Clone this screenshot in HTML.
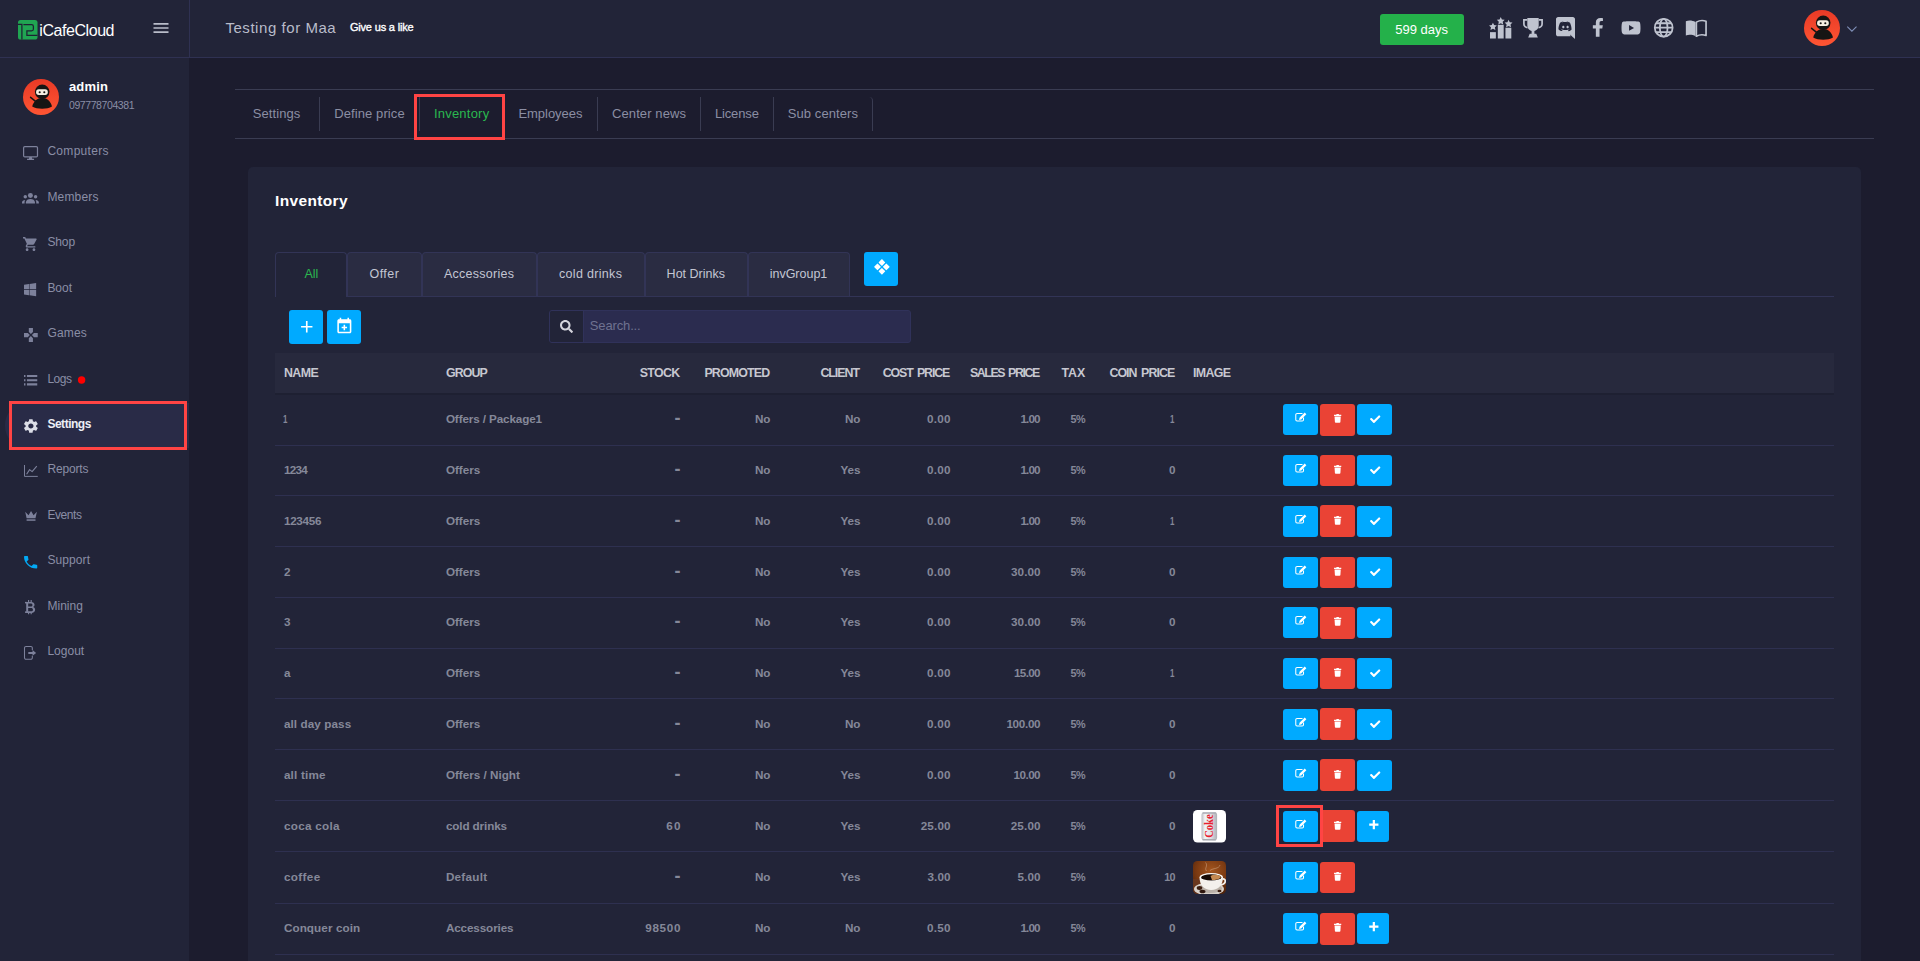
<!DOCTYPE html><html lang="en"><head><meta charset="utf-8"><title>iCafeCloud - Inventory</title><style>*{margin:0;padding:0}html,body{width:1920px;height:961px;overflow:hidden;background:#1c1c2e;font-family:"Liberation Sans", sans-serif}
.b{position:absolute}.ic{position:absolute;display:block;overflow:visible}
.t{position:absolute;white-space:nowrap;line-height:1;}</style></head><body>
<header>
<div class="b" style="left:0px;top:0px;width:1920px;height:57px;background:#222438;"></div>
<div class="b" style="left:0px;top:57px;width:1920px;height:1px;background:#2f3152;"></div>
<div class="b" style="left:189px;top:0px;width:1px;height:57px;background:#2f3152;"></div>
<svg class="ic" style="left:18px;top:20px;width:19.5px;height:19.5px" viewBox="0 0 19.500 19.500"><rect x="0" y="0" width="19.500" height="19.500" rx="2.600" fill="#20a552"/><path d="M0 4.300H3.900M3.900 3.700V19.500M5.400 4.600H13.600a1.800 1.800 0 0 1 1.800 1.800V9a1.800 1.800 0 0 1-1.800 1.800H8.900V15.400H19.500" fill="none" stroke="#1d2233" stroke-width="1.250"/></svg>
<svg class="ic" style="left:151px;top:16px;width:20px;height:24px;color:#b9bcc9;" viewBox="0 0 24 24" fill="currentColor" preserveAspectRatio="xMidYMid meet"><path d="M3 18h18v-2H3v2zm0-5h18v-2H3v2zm0-7v2h18V6H3z"/></svg>
<svg class="ic" style="left:1804px;top:10px;width:36px;height:36px" viewBox="0 0 36 36"><defs><linearGradient id="g2" x1="0" y1="0" x2="0" y2="1"><stop offset="0" stop-color="#e83a26"/><stop offset="1" stop-color="#ff5533"/></linearGradient></defs><circle cx="18" cy="18" r="18" fill="url(#g2)"/><path d="M9.200 27.600c1.500-5.600 5-8.600 10-8.600s8.500 3 9.800 8.600c-2.500 1.500-6 2.200-9.800 2.200s-7.500-.7-10-2.200z" fill="#161514"/><circle cx="19.200" cy="12.800" r="7.300" fill="#161514"/><rect x="13.100" y="10.300" width="11.700" height="5.600" rx="2.600" fill="#f6efe2"/><circle cx="16.700" cy="13.200" r="1.050" fill="#161514"/><circle cx="21.300" cy="13.200" r="1.050" fill="#161514"/><path d="M7.600 18.300l5.600 4.600" stroke="#161514" stroke-width="1.500" stroke-linecap="round"/></svg>
<svg class="ic" style="left:1843.7px;top:20.6px;width:15.8px;height:15.8px;color:#8090b8;" viewBox="0 0 24 24" fill="currentColor" preserveAspectRatio="xMidYMid meet"><path d="M5 8.500l7 7 7-7" fill="none" stroke="currentColor" stroke-width="1.600"/></svg>
<div class="b" style="left:1380px;top:14px;width:84px;height:31px;background:#24b14a;border-radius:3px;"></div>
<svg class="ic" style="left:1488.5px;top:17px;width:23.5px;height:21.5px;color:#bfc3cf;" viewBox="0 0 24 22" fill="currentColor" preserveAspectRatio="xMidYMid meet"><rect x="1" y="15.500" width="6" height="6.500"/><rect x="9" y="8" width="6" height="14"/><rect x="16.800" y="11" width="6" height="11"/><path d="M4 5.800l1.200 2.500 2.800.4-2 1.900.5 2.800L4 12.100l-2.500 1.300.5-2.800-2-1.900 2.800-.4z"/><path d="M12 0l1.200 2.500 2.800.4-2 1.900.5 2.800L12 6.300 9.500 7.600l.5-2.800-2-1.900 2.800-.4z"/><path d="M20 2.800l1.200 2.500 2.800.4-2 1.900.5 2.800L20 9.100l-2.500 1.300.5-2.800-2-1.900 2.800-.4z"/></svg>
<svg class="ic" style="left:1522.9px;top:17.7px;width:20px;height:19.4px;color:#bfc3cf;" viewBox="0 0 20 19.500" fill="currentColor" preserveAspectRatio="none"><path d="M4.300 0H15.700V7.500a5.700 5.700 0 0 1-11.400 0z"/><path d="M4.300 1.900H.9V6a3.600 3.600 0 0 0 3.600 3.600M15.700 1.900h3.400V6a3.600 3.600 0 0 1-3.600 3.600" fill="none" stroke="currentColor" stroke-width="1.700"/><rect x="8.600" y="12.500" width="2.800" height="3.800"/><path d="M5.200 19.500l1.500-3.600h6.600l1.500 3.600z"/></svg>
<svg class="ic" style="left:1556px;top:16.8px;width:19px;height:22px;color:#bfc3cf;" viewBox="0 0 20 23" fill="currentColor" preserveAspectRatio="xMidYMid meet"><path fill-rule="evenodd" d="M2.300 0h15.400C19 0 20 1 20 2.300V23l-2.400-2.100-1.400-1.300-1.400-1.300.6 2H2.300C1 20.300 0 19.300 0 18V2.300C0 1 1 0 2.300 0zM13.300 14.700s-.4-.5-.8-1c1.600-.4 2.200-1.400 2.200-1.400-.5.300-1 .6-1.400.7-.6.300-1.200.4-1.800.5-1.200.2-2.300.2-3.200 0-.7-.1-1.300-.3-1.800-.5-.3-.1-.6-.2-.9-.4l-.1-.1-.1 0c-.2-.100-.4-.2-.4-.2s.6 1 2.100 1.400c-.400.500-.800 1-.800 1-2.700-.1-3.700-1.800-3.700-1.800 0-3.900 1.700-7 1.700-7 1.700-1.300 3.400-1.300 3.400-1.300l.1.200c-2.200.6-3.200 1.600-3.200 1.600s.300-.100.700-.300c1.300-.6 2.300-.700 2.700-.800h.200c.700-.100 1.500-.100 2.400 0 1.100.100 2.300.500 3.500 1.100 0 0-1-.9-3-1.500l.2-.2s1.700 0 3.400 1.300c0 0 1.700 3.100 1.700 7 0 0-1 1.700-3.700 1.800zM7.700 9c-.700 0-1.200.6-1.200 1.400s.600 1.400 1.200 1.400c.700 0 1.200-.6 1.200-1.400S8.400 9 7.700 9zm4.500 0c-.700 0-1.200.6-1.200 1.400s.600 1.400 1.200 1.400c.700 0 1.200-.6 1.200-1.400S12.900 9 12.200 9z"/></svg>
<svg class="ic" style="left:1592.2px;top:18.1px;width:11.8px;height:18.7px;color:#bfc3cf;" viewBox="0 0 320 512" fill="currentColor" preserveAspectRatio="none"><path d="M279.14 288l14.22-92.66h-88.91v-60.130c0-25.350 12.420-50.060 52.240-50.060h40.420V6.260S260.430 0 225.360 0c-73.220 0-121.080 44.380-121.080 124.720v70.620H22.890V288h81.390v224h100.170V288z"/></svg>
<svg class="ic" style="left:1620.5px;top:18.5px;width:20.04px;height:17.8px;color:#bfc3cf;" viewBox="0 0 576 512" fill="currentColor" preserveAspectRatio="xMidYMid meet"><path d="M549.655 124.083c-6.281-23.650-24.787-42.276-48.284-48.597C458.781 64 288 64 288 64S117.220 64 74.629 75.486c-23.497 6.322-42.003 24.947-48.284 48.597-11.412 42.867-11.412 132.305-11.412 132.305s0 89.438 11.412 132.305c6.281 23.650 24.787 41.500 48.284 47.821C117.220 448 288 448 288 448s170.780 0 213.371-11.486c23.497-6.321 42.003-24.171 48.284-47.821 11.412-42.867 11.412-132.305 11.412-132.305s0-89.438-11.412-132.305zm-317.510 213.508V175.185l142.739 81.205-142.739 81.201z"/></svg>
<svg class="ic" style="left:1652.6px;top:16.7px;width:21.4px;height:21.4px;color:#bfc3cf;" viewBox="0 0 24 24" fill="currentColor" preserveAspectRatio="xMidYMid meet"><g fill="none" stroke="currentColor" stroke-width="2"><circle cx="12" cy="12" r="10"/><ellipse cx="12" cy="12" rx="4.300" ry="10"/><path d="M2 12h20M3.500 7h17M3.500 17h17"/></g></svg>
<svg class="ic" style="left:1684.7px;top:19.8px;width:21.9px;height:17px;color:#bfc3cf;" viewBox="0 0 26 20" fill="currentColor" preserveAspectRatio="none"><path d="M1 1.500c3.500-1.300 8-1 11.500 1V19c-3.500-1.800-8-2-11.500-.8z"/><path d="M25 1.500c-3.500-1.300-8-1-11.500 1V19c3.500-1.800 8-2 11.500-.8z" fill="none" stroke="currentColor" stroke-width="2" stroke-linejoin="round"/></svg>
<span class="t" style="left:39.30px;top:23px;font-size:16px;font-weight:400;color:#ffffff;letter-spacing:-0.440px;">iCafeCloud</span>
<span class="t" style="left:225.40px;top:20px;font-size:15px;font-weight:400;color:#b9bcca;letter-spacing:0.554px;">Testing for Maa</span>
<span class="t" style="left:349.90px;top:22px;font-size:11px;font-weight:400;color:#ffffff;letter-spacing:-0.172px;-webkit-text-stroke:0.35px #ffffff;">Give us a like</span>
<span class="t" style="left:1395.30px;top:23px;font-size:13px;font-weight:400;color:#ffffff;letter-spacing:-0.009px;">599 days</span>
</header>
<aside>
<div class="b" style="left:0px;top:58px;width:189px;height:903px;background:#222438;"></div>
<svg class="ic" style="left:23px;top:79px;width:36px;height:36px" viewBox="0 0 36 36"><defs><linearGradient id="g1" x1="0" y1="0" x2="0" y2="1"><stop offset="0" stop-color="#e83a26"/><stop offset="1" stop-color="#ff5533"/></linearGradient></defs><circle cx="18" cy="18" r="18" fill="url(#g1)"/><path d="M9.200 27.600c1.500-5.600 5-8.600 10-8.600s8.500 3 9.800 8.600c-2.500 1.500-6 2.200-9.800 2.200s-7.500-.7-10-2.200z" fill="#161514"/><circle cx="19.200" cy="12.800" r="7.300" fill="#161514"/><rect x="13.100" y="10.300" width="11.700" height="5.600" rx="2.600" fill="#f6efe2"/><circle cx="16.700" cy="13.200" r="1.050" fill="#161514"/><circle cx="21.300" cy="13.200" r="1.050" fill="#161514"/><path d="M7.600 18.300l5.600 4.600" stroke="#161514" stroke-width="1.500" stroke-linecap="round"/></svg>
<div class="b" style="left:5px;top:403px;width:184px;height:45px;background:#292b47;border-radius:22px 0 0 22px;"></div>
<div class="b" style="left:9px;top:401px;width:178px;height:49px;background:#292b47;border:3px solid #ff4444;box-sizing:border-box;"></div>
<svg class="ic" style="left:22.9px;top:145.9px;width:15.1px;height:14.1px;color:#7d819b;" viewBox="0 0 15 14" fill="currentColor" preserveAspectRatio="none"><rect x=".6" y=".6" width="13.800" height="10.300" rx="1.200" fill="none" stroke="currentColor" stroke-width="1.200"/><path d="M6.300 11h2.400l.5 1.600H11V14H4v-1.400h1.800z"/></svg>
<svg class="ic" style="left:22.25px;top:193.1px;width:16.85px;height:10.4px;color:#7d819b;" viewBox="0 0 17 10.400" fill="currentColor" preserveAspectRatio="none"><circle cx="8.500" cy="2.500" r="2.500"/><path d="M3.900 10.400v-1c0-2.200 2.300-3.400 4.600-3.400s4.600 1.200 4.600 3.400v1z"/><circle cx="3.300" cy="3.700" r="1.750"/><circle cx="13.700" cy="3.700" r="1.750"/><path d="M0 10.400v-.9c0-1.500 1.400-2.500 3.300-2.600-.5.700-.7 1.500-.7 2.400v1.100z"/><path d="M17 10.400v-.9c0-1.500-1.400-2.500-3.300-2.600.5.700.7 1.500.7 2.400v1.100z"/></svg>
<svg class="ic" style="left:22.9px;top:236.9px;width:13.7px;height:14.1px;color:#7d819b;" viewBox="1 2 20 20" fill="currentColor" preserveAspectRatio="none"><path d="M7 18c-1.1 0-1.99.9-1.99 2S5.9 22 7 22s2-.9 2-2-.9-2-2-2zM1 2v2h2l3.6 7.59-1.35 2.45c-.16.28-.25.61-.25.96 0 1.1.9 2 2 2h12v-2H7.42c-.14 0-.25-.11-.25-.25l.03-.12.9-1.63h7.45c.75 0 1.41-.41 1.75-1.03l3.58-6.49c.08-.14.12-.31.12-.48 0-.55-.45-1-1-1H5.21l-.94-2H1zm16 16c-1.1 0-1.99.9-1.99 2s.89 2 1.99 2 2-.9 2-2-.9-2-2-2z"/></svg>
<svg class="ic" style="left:24.1px;top:282.75px;width:12.15px;height:13.25px;color:#7d819b;" viewBox="0 32 448 448" fill="currentColor" preserveAspectRatio="none"><path d="M0 93.7l183.6-25.3v177.4H0V93.7zm0 324.6l183.6 25.3V268.4H0v149.9zm203.8 28L448 480V268.4H203.8v177.9zm0-380.6v180.1H448V32L203.8 65.7z"/></svg>
<svg class="ic" style="left:23.75px;top:327.9px;width:13.75px;height:14.1px;color:#7d819b;" viewBox="2 2 20 20" fill="currentColor" preserveAspectRatio="none"><path d="M15 7.5V2H9v5.5l3 3 3-3zM7.5 9H2v6h5.5l3-3-3-3zM9 16.5V22h6v-5.5l-3-3-3 3zM16.5 9l-3 3 3 3H22V9h-5.5z"/></svg>
<svg class="ic" style="left:23.75px;top:375px;width:13.25px;height:10.4px;color:#7d819b;" viewBox="3 7 18 10" fill="currentColor" preserveAspectRatio="none"><path d="M3 13h2v-2H3v2zm0 4h2v-2H3v2zm0-8h2V7H3v2zm4 4h14v-2H7v2zm0 4h14v-2H7v2zM7 7v2h14V7H7z"/></svg>
<svg class="ic" style="left:23.75px;top:419.1px;width:13.75px;height:14.15px;color:#dcdee7;" viewBox="2.6 2 18.8 20" fill="currentColor" preserveAspectRatio="none"><path d="M19.14 12.94c.04-.3.06-.61.06-.94 0-.32-.02-.64-.07-.94l2.03-1.58c.18-.14.23-.41.12-.61l-1.92-3.32c-.12-.22-.37-.29-.59-.22l-2.39.96c-.5-.38-1.03-.7-1.62-.94l-.36-2.54c-.04-.24-.24-.41-.48-.41h-3.84c-.24 0-.43.17-.47.41l-.36 2.54c-.59.24-1.13.57-1.62.94l-2.39-.96c-.22-.08-.47 0-.59.22L2.74 8.87c-.12.21-.08.47.12.61l2.03 1.58c-.05.3-.09.63-.09.94s.02.64.07.94l-2.03 1.58c-.18.14-.23.41-.12.61l1.92 3.32c.12.22.37.29.59.22l2.39-.96c.5.38 1.03.7 1.62.94l.36 2.54c.05.24.24.41.48.41h3.84c.24 0 .44-.17.47-.41l.36-2.54c.59-.24 1.13-.56 1.62-.94l2.39.96c.22.08.47 0 .59-.22l1.92-3.32c.12-.22.07-.47-.12-.61l-2.01-1.58zM12 15.6c-1.98 0-3.6-1.62-3.6-3.6s1.620-3.600 3.600-3.600 3.600 1.620 3.600 3.600-1.620 3.600-3.600 3.600z"/></svg>
<svg class="ic" style="left:23.75px;top:465.1px;width:13.75px;height:11.9px;color:#7d819b;" viewBox="0 0 13.750 12" fill="currentColor" preserveAspectRatio="none"><path d="M.5 0v11.500h13.250" fill="none" stroke="currentColor" stroke-width="1"/><path d="M2.600 9.300l3-4.600 2.500 2 4.700-5.600" fill="none" stroke="currentColor" stroke-width="1.100" stroke-linejoin="round"/></svg>
<svg class="ic" style="left:24.5px;top:511.4px;width:12.1px;height:10px;color:#7d819b;" viewBox="0 0 12.100 10" fill="currentColor" preserveAspectRatio="none"><path d="M.2.800l3.300 3.400L6.050 0l2.550 4.200L11.900.8l-1.400 6.400H1.600z"/><rect x="1.600" y="8.300" width="8.900" height="1.500"/></svg>
<svg class="ic" style="left:23.75px;top:555.75px;width:13.25px;height:12.5px;color:#03a9f4;" viewBox="3 3 18 18" fill="currentColor" preserveAspectRatio="none"><path d="M6.62 10.79c1.44 2.83 3.76 5.14 6.59 6.59l2.2-2.2c.27-.27.67-.36 1.02-.24 1.12.37 2.33.57 3.57.57.55 0 1 .45 1 1V20c0 .55-.45 1-1 1-9.39 0-17-7.61-17-17 0-.55.45-1 1-1h3.5c.55 0 1 .45 1 1 0 1.25.2 2.45.57 3.57.11.35.03.74-.25 1.020l-2.200 2.200z"/></svg>
<svg class="ic" style="left:25.4px;top:599.75px;width:10.35px;height:14.25px;color:#7d819b;" viewBox="0 0 10.400 14.250" fill="currentColor" preserveAspectRatio="none"><path fill-rule="evenodd" d="M1.200 1.900h4.900c2.200 0 3.500 1.100 3.500 2.800 0 1.200-.7 2-1.700 2.400 1.400.3 2.300 1.300 2.300 2.700 0 1.900-1.500 3.100-3.900 3.100H1.200zm2 1.600v3h2.500c1.100 0 1.800-.5 1.800-1.500s-.7-1.500-1.800-1.500zm0 4.500v3.300h2.900c1.200 0 1.900-.6 1.900-1.600S7.300 8 6.100 8z"/><rect x="3" y="0" width="1.200" height="2.400"/><rect x="5.600" y="0" width="1.200" height="2.400"/><rect x="3" y="12" width="1.200" height="2.250"/><rect x="5.600" y="12" width="1.200" height="2.250"/><rect x="0" y="1.900" width="2" height="1.500"/><rect x="0" y="11.400" width="2" height="1.500"/></svg>
<svg class="ic" style="left:24.1px;top:646.25px;width:12.15px;height:13.75px;color:#7d819b;" viewBox="0 0 12.100 13.750" fill="currentColor" preserveAspectRatio="none"><path d="M8.300 4V2a1.500 1.500 0 0 0-1.500-1.500H2A1.500 1.500 0 0 0 .5 2v9.750a1.500 1.500 0 0 0 1.500 1.500h4.800a1.500 1.500 0 0 0 1.500-1.500v-2" fill="none" stroke="currentColor" stroke-width="1.050"/><path d="M4.300 5.900h4.200V4l3.600 2.900-3.600 2.900V7.900H4.300z"/></svg>
<svg class="ic" style="left:77px;top:375px;width:10px;height:10px" viewBox="0 0 10 10"><circle cx="4.600" cy="5" r="3.700" fill="#ff0000"/></svg>
<span class="t" style="left:47.40px;top:145px;font-size:12px;font-weight:400;color:#8a8ea6;letter-spacing:0.302px;">Computers</span>
<span class="t" style="left:47.40px;top:191px;font-size:12px;font-weight:400;color:#8a8ea6;letter-spacing:0.181px;">Members</span>
<span class="t" style="left:47.40px;top:236px;font-size:12px;font-weight:400;color:#8a8ea6;letter-spacing:-0.110px;">Shop</span>
<span class="t" style="left:47.40px;top:282px;font-size:12px;font-weight:400;color:#8a8ea6;letter-spacing:-0.029px;">Boot</span>
<span class="t" style="left:47.40px;top:327px;font-size:12px;font-weight:400;color:#8a8ea6;letter-spacing:0.178px;">Games</span>
<span class="t" style="left:47.40px;top:373px;font-size:12px;font-weight:400;color:#8a8ea6;letter-spacing:-0.477px;">Logs</span>
<span class="t" style="left:47.40px;top:418px;font-size:12px;font-weight:700;color:#eceef5;letter-spacing:-0.478px;">Settings</span>
<span class="t" style="left:47.40px;top:463px;font-size:12px;font-weight:400;color:#8a8ea6;letter-spacing:-0.172px;">Reports</span>
<span class="t" style="left:47.40px;top:509px;font-size:12px;font-weight:400;color:#8a8ea6;letter-spacing:-0.417px;">Events</span>
<span class="t" style="left:47.40px;top:554px;font-size:12px;font-weight:400;color:#8a8ea6;letter-spacing:0.095px;">Support</span>
<span class="t" style="left:47.40px;top:600px;font-size:12px;font-weight:400;color:#8a8ea6;letter-spacing:0.048px;">Mining</span>
<span class="t" style="left:47.40px;top:645px;font-size:12px;font-weight:400;color:#8a8ea6;letter-spacing:0.019px;">Logout</span>
<span class="t" style="left:68.90px;top:80px;font-size:13px;font-weight:700;color:#ffffff;letter-spacing:0.201px;">admin</span>
<span class="t" style="left:69.00px;top:100px;font-size:10.5px;font-weight:400;color:#8a8ea6;letter-spacing:-0.416px;">097778704381</span>
</aside>
<main>
<div class="b" style="left:235px;top:89px;width:1639px;height:1px;background:#3a3c52;"></div>
<div class="b" style="left:235px;top:138px;width:1639px;height:1px;background:#3a3c52;"></div>
<div class="b" style="left:319px;top:97px;width:1px;height:34px;background:#3a3c52;"></div>
<div class="b" style="left:419px;top:97px;width:1px;height:34px;background:#3a3c52;"></div>
<div class="b" style="left:504px;top:97px;width:1px;height:34px;background:#3a3c52;"></div>
<div class="b" style="left:597px;top:97px;width:1px;height:34px;background:#3a3c52;"></div>
<div class="b" style="left:700px;top:97px;width:1px;height:34px;background:#3a3c52;"></div>
<div class="b" style="left:773px;top:97px;width:1px;height:34px;background:#3a3c52;"></div>
<div class="b" style="left:868px;top:97px;width:5px;height:34px;border-right:1px solid #3a3c52;border-top-right-radius:4px;box-sizing:border-box;"></div>
<div class="b" style="left:414px;top:94px;width:91px;height:46px;border:3px solid #ff4444;box-sizing:border-box;"></div>
<div class="b" style="left:248px;top:167px;width:1613px;height:800px;background:#222438;border-radius:5px;"></div>
<div class="b" style="left:275px;top:296px;width:1559px;height:1px;background:#323456;"></div>
<div class="b" style="left:275px;top:252px;width:72px;height:45px;background:#222438;border:1px solid #323456;border-bottom:none;border-radius:4px 4px 0 0;box-sizing:border-box;"></div>
<div class="b" style="left:347px;top:252px;width:75px;height:44px;background:#2a2c42;border:1px solid #323456;border-bottom:none;border-radius:4px 4px 0 0;box-sizing:border-box;"></div>
<div class="b" style="left:422px;top:252px;width:115px;height:44px;background:#2a2c42;border:1px solid #323456;border-bottom:none;border-radius:4px 4px 0 0;box-sizing:border-box;"></div>
<div class="b" style="left:537px;top:252px;width:108px;height:44px;background:#2a2c42;border:1px solid #323456;border-bottom:none;border-radius:4px 4px 0 0;box-sizing:border-box;"></div>
<div class="b" style="left:645px;top:252px;width:103px;height:44px;background:#2a2c42;border:1px solid #323456;border-bottom:none;border-radius:4px 4px 0 0;box-sizing:border-box;"></div>
<div class="b" style="left:748px;top:252px;width:102px;height:44px;background:#2a2c42;border:1px solid #323456;border-bottom:none;border-radius:4px 4px 0 0;box-sizing:border-box;"></div>
<div class="b" style="left:864px;top:252px;width:34px;height:34px;background:#00aaff;border-radius:3px;"></div>
<svg class="ic" style="left:872.7px;top:258.2px;width:17.8px;height:17.8px;color:#ffffff;" viewBox="0 0 24 24" fill="currentColor" preserveAspectRatio="xMidYMid meet"><g transform="rotate(45 12 12)"><rect x="4.500" y="4.500" width="6.600" height="6.600" rx=".6"/><rect x="12.900" y="4.500" width="6.600" height="6.600" rx=".6"/><rect x="4.500" y="12.900" width="6.600" height="6.600" rx=".6"/><rect x="12.900" y="12.900" width="6.600" height="6.600" rx=".6"/></g></svg>
<div class="b" style="left:289px;top:310px;width:34px;height:34px;background:#00aaff;border-radius:3px;"></div>
<svg class="ic" style="left:296.5px;top:316.8px;width:19.5px;height:19.5px;color:#ffffff;" viewBox="0 0 24 24" fill="currentColor" preserveAspectRatio="xMidYMid meet"><path d="M11 5h2v6h6v2h-6v6h-2v-6H5v-2h6z"/></svg>
<div class="b" style="left:327px;top:310px;width:34px;height:34px;background:#00aaff;border-radius:3px;"></div>
<svg class="ic" style="left:334.7px;top:316.9px;width:18.7px;height:18.7px;color:#ffffff;" viewBox="0 0 24 24" fill="currentColor" preserveAspectRatio="xMidYMid meet"><path d="M19 3h-1V1h-2v2H8V1H6v2H5c-1.100 0-2 .9-2 2v14c0 1.100.9 2 2 2h14c1.100 0 2-.9 2-2V5c0-1.100-.9-2-2-2zm0 16H5V8h14v11zm-8-2h2v-2.500h2.500v-2H13V10h-2v2.500H8.500v2H11z"/></svg>
<div class="b" style="left:549px;top:310px;width:362px;height:33px;background:#2b2c4f;border:1px solid #30325a;border-radius:3px;box-sizing:border-box;"></div>
<div class="b" style="left:550px;top:311px;width:33px;height:31px;background:#222438;border-right:1px solid #30325a;border-radius:2px 0 0 2px;"></div>
<svg class="ic" style="left:560px;top:319.5px;width:13px;height:13px;color:#d4d4dc;" viewBox="0 0 512 512" fill="currentColor" preserveAspectRatio="xMidYMid meet"><path d="M505 442.700L405.300 343c-4.500-4.500-10.600-7-17-7H372c27.600-35.300 44-79.700 44-128C416 93.100 322.900 0 208 0S0 93.100 0 208s93.100 208 208 208c48.300 0 92.700-16.400 128-44v16.300c0 6.400 2.500 12.500 7 17l99.700 99.700c9.400 9.400 24.600 9.400 33.900 0l28.300-28.300c9.400-9.400 9.400-24.600.1-34zM208 336c-70.700 0-128-57.200-128-128 0-70.700 57.200-128 128-128 70.700 0 128 57.200 128 128 0 70.700-57.200 128-128 128z"/></svg>
<div class="b" style="left:275px;top:353px;width:1559px;height:41px;background:#27293d;"></div>
<div class="b" style="left:275px;top:393px;width:1559px;height:1.5px;background:#1e2032;"></div>
<div class="b" style="left:275px;top:445px;width:1559px;height:1px;background:#2e3050;"></div>
<div class="b" style="left:1283px;top:404px;width:35px;height:31px;background:#00aaff;border-radius:3px;"></div>
<svg class="ic" style="left:1294.8px;top:412.4px;width:12.4px;height:9.8px;color:#ffffff;" viewBox="0 0 24 19" fill="currentColor" preserveAspectRatio="xMidYMid meet"><path d="M14.500 3H4a2.500 2.500 0 0 0-2.500 2.500V15A2.500 2.500 0 0 0 4 17.500h10A2.500 2.500 0 0 0 16.500 15V10.500" fill="none" stroke="currentColor" stroke-width="2"/><path d="M18.800 1.200l3.200 3.200L12 14.400l-4.200 1 1-4.200z"/></svg>
<div class="b" style="left:1320px;top:404px;width:35px;height:32px;background:#ea4335;border-radius:3px;"></div>
<svg class="ic" style="left:1334px;top:413.9px;width:7.3px;height:8.8px;color:#ffffff;" viewBox="0 0 14 17" fill="currentColor" preserveAspectRatio="xMidYMid meet"><path d="M0 1.600h4.200L5 0h4l.8 1.600H14v2.200H0z"/><path d="M1 5h12l-.7 10.500a1.600 1.600 0 0 1-1.600 1.500H3.300a1.600 1.600 0 0 1-1.600-1.500z"/></svg>
<div class="b" style="left:1357px;top:404px;width:35px;height:31px;background:#00aaff;border-radius:3px;"></div>
<svg class="ic" style="left:1369.8px;top:413.8px;width:10.4px;height:10.4px;color:#ffffff;" viewBox="0 0 512 512" fill="currentColor" preserveAspectRatio="xMidYMid meet"><path d="M173.898 439.404l-166.400-166.400c-9.997-9.997-9.997-26.206 0-36.204l36.203-36.204c9.997-9.998 26.207-9.998 36.204 0L192 312.690 432.095 72.596c9.997-9.997 26.207-9.997 36.204 0l36.203 36.204c9.997 9.997 9.997 26.206 0 36.204l-294.400 294.401c-9.998 9.997-26.207 9.997-36.204-.001z"/></svg>
<div class="b" style="left:275px;top:495px;width:1559px;height:1px;background:#2e3050;"></div>
<div class="b" style="left:1283px;top:455px;width:35px;height:31px;background:#00aaff;border-radius:3px;"></div>
<svg class="ic" style="left:1294.8px;top:463.4px;width:12.4px;height:9.8px;color:#ffffff;" viewBox="0 0 24 19" fill="currentColor" preserveAspectRatio="xMidYMid meet"><path d="M14.500 3H4a2.500 2.500 0 0 0-2.500 2.500V15A2.500 2.500 0 0 0 4 17.500h10A2.500 2.500 0 0 0 16.500 15V10.500" fill="none" stroke="currentColor" stroke-width="2"/><path d="M18.800 1.200l3.200 3.200L12 14.400l-4.200 1 1-4.200z"/></svg>
<div class="b" style="left:1320px;top:455px;width:35px;height:31px;background:#ea4335;border-radius:3px;"></div>
<svg class="ic" style="left:1334px;top:464.9px;width:7.3px;height:8.8px;color:#ffffff;" viewBox="0 0 14 17" fill="currentColor" preserveAspectRatio="xMidYMid meet"><path d="M0 1.600h4.200L5 0h4l.8 1.600H14v2.200H0z"/><path d="M1 5h12l-.7 10.500a1.600 1.600 0 0 1-1.600 1.500H3.300a1.600 1.600 0 0 1-1.600-1.500z"/></svg>
<div class="b" style="left:1357px;top:455px;width:35px;height:31px;background:#00aaff;border-radius:3px;"></div>
<svg class="ic" style="left:1369.8px;top:464.8px;width:10.4px;height:10.4px;color:#ffffff;" viewBox="0 0 512 512" fill="currentColor" preserveAspectRatio="xMidYMid meet"><path d="M173.898 439.404l-166.400-166.400c-9.997-9.997-9.997-26.206 0-36.204l36.203-36.204c9.997-9.998 26.207-9.998 36.204 0L192 312.690 432.095 72.596c9.997-9.997 26.207-9.997 36.204 0l36.203 36.204c9.997 9.997 9.997 26.206 0 36.204l-294.400 294.401c-9.998 9.997-26.207 9.997-36.204-.001z"/></svg>
<div class="b" style="left:275px;top:546px;width:1559px;height:1px;background:#2e3050;"></div>
<div class="b" style="left:1283px;top:506px;width:35px;height:31px;background:#00aaff;border-radius:3px;"></div>
<svg class="ic" style="left:1294.8px;top:514.4px;width:12.4px;height:9.8px;color:#ffffff;" viewBox="0 0 24 19" fill="currentColor" preserveAspectRatio="xMidYMid meet"><path d="M14.500 3H4a2.500 2.500 0 0 0-2.500 2.500V15A2.500 2.500 0 0 0 4 17.500h10A2.500 2.500 0 0 0 16.500 15V10.500" fill="none" stroke="currentColor" stroke-width="2"/><path d="M18.800 1.200l3.200 3.200L12 14.400l-4.200 1 1-4.200z"/></svg>
<div class="b" style="left:1320px;top:505px;width:35px;height:32px;background:#ea4335;border-radius:3px;"></div>
<svg class="ic" style="left:1334px;top:515.9px;width:7.3px;height:8.8px;color:#ffffff;" viewBox="0 0 14 17" fill="currentColor" preserveAspectRatio="xMidYMid meet"><path d="M0 1.600h4.200L5 0h4l.8 1.600H14v2.200H0z"/><path d="M1 5h12l-.7 10.500a1.600 1.600 0 0 1-1.600 1.500H3.300a1.600 1.600 0 0 1-1.600-1.500z"/></svg>
<div class="b" style="left:1357px;top:506px;width:35px;height:31px;background:#00aaff;border-radius:3px;"></div>
<svg class="ic" style="left:1369.8px;top:515.8px;width:10.4px;height:10.4px;color:#ffffff;" viewBox="0 0 512 512" fill="currentColor" preserveAspectRatio="xMidYMid meet"><path d="M173.898 439.404l-166.400-166.400c-9.997-9.997-9.997-26.206 0-36.204l36.203-36.204c9.997-9.998 26.207-9.998 36.204 0L192 312.690 432.095 72.596c9.997-9.997 26.207-9.997 36.204 0l36.203 36.204c9.997 9.997 9.997 26.206 0 36.204l-294.400 294.401c-9.998 9.997-26.207 9.997-36.204-.001z"/></svg>
<div class="b" style="left:275px;top:597px;width:1559px;height:1px;background:#2e3050;"></div>
<div class="b" style="left:1283px;top:557px;width:35px;height:31px;background:#00aaff;border-radius:3px;"></div>
<svg class="ic" style="left:1294.8px;top:565.4px;width:12.4px;height:9.8px;color:#ffffff;" viewBox="0 0 24 19" fill="currentColor" preserveAspectRatio="xMidYMid meet"><path d="M14.500 3H4a2.500 2.500 0 0 0-2.500 2.500V15A2.500 2.500 0 0 0 4 17.500h10A2.500 2.500 0 0 0 16.500 15V10.500" fill="none" stroke="currentColor" stroke-width="2"/><path d="M18.800 1.200l3.200 3.200L12 14.400l-4.200 1 1-4.200z"/></svg>
<div class="b" style="left:1320px;top:557px;width:35px;height:31px;background:#ea4335;border-radius:3px;"></div>
<svg class="ic" style="left:1334px;top:566.9px;width:7.3px;height:8.8px;color:#ffffff;" viewBox="0 0 14 17" fill="currentColor" preserveAspectRatio="xMidYMid meet"><path d="M0 1.600h4.200L5 0h4l.8 1.600H14v2.200H0z"/><path d="M1 5h12l-.7 10.500a1.600 1.600 0 0 1-1.600 1.500H3.300a1.600 1.600 0 0 1-1.600-1.500z"/></svg>
<div class="b" style="left:1357px;top:557px;width:35px;height:31px;background:#00aaff;border-radius:3px;"></div>
<svg class="ic" style="left:1369.8px;top:566.8px;width:10.4px;height:10.4px;color:#ffffff;" viewBox="0 0 512 512" fill="currentColor" preserveAspectRatio="xMidYMid meet"><path d="M173.898 439.404l-166.400-166.400c-9.997-9.997-9.997-26.206 0-36.204l36.203-36.204c9.997-9.998 26.207-9.998 36.204 0L192 312.690 432.095 72.596c9.997-9.997 26.207-9.997 36.204 0l36.203 36.204c9.997 9.997 9.997 26.206 0 36.204l-294.400 294.401c-9.998 9.997-26.207 9.997-36.204-.001z"/></svg>
<div class="b" style="left:275px;top:648px;width:1559px;height:1px;background:#2e3050;"></div>
<div class="b" style="left:1283px;top:607px;width:35px;height:31px;background:#00aaff;border-radius:3px;"></div>
<svg class="ic" style="left:1294.8px;top:615.4px;width:12.4px;height:9.8px;color:#ffffff;" viewBox="0 0 24 19" fill="currentColor" preserveAspectRatio="xMidYMid meet"><path d="M14.500 3H4a2.500 2.500 0 0 0-2.500 2.500V15A2.500 2.500 0 0 0 4 17.500h10A2.500 2.500 0 0 0 16.500 15V10.500" fill="none" stroke="currentColor" stroke-width="2"/><path d="M18.800 1.200l3.200 3.200L12 14.400l-4.200 1 1-4.200z"/></svg>
<div class="b" style="left:1320px;top:607px;width:35px;height:32px;background:#ea4335;border-radius:3px;"></div>
<svg class="ic" style="left:1334px;top:616.9px;width:7.3px;height:8.8px;color:#ffffff;" viewBox="0 0 14 17" fill="currentColor" preserveAspectRatio="xMidYMid meet"><path d="M0 1.600h4.200L5 0h4l.8 1.600H14v2.200H0z"/><path d="M1 5h12l-.7 10.500a1.600 1.600 0 0 1-1.600 1.500H3.300a1.600 1.600 0 0 1-1.600-1.500z"/></svg>
<div class="b" style="left:1357px;top:607px;width:35px;height:31px;background:#00aaff;border-radius:3px;"></div>
<svg class="ic" style="left:1369.8px;top:616.8px;width:10.4px;height:10.4px;color:#ffffff;" viewBox="0 0 512 512" fill="currentColor" preserveAspectRatio="xMidYMid meet"><path d="M173.898 439.404l-166.400-166.400c-9.997-9.997-9.997-26.206 0-36.204l36.203-36.204c9.997-9.998 26.207-9.998 36.204 0L192 312.690 432.095 72.596c9.997-9.997 26.207-9.997 36.204 0l36.203 36.204c9.997 9.997 9.997 26.206 0 36.204l-294.400 294.401c-9.998 9.997-26.207 9.997-36.204-.001z"/></svg>
<div class="b" style="left:275px;top:698px;width:1559px;height:1px;background:#2e3050;"></div>
<div class="b" style="left:1283px;top:658px;width:35px;height:31px;background:#00aaff;border-radius:3px;"></div>
<svg class="ic" style="left:1294.8px;top:666.4px;width:12.4px;height:9.8px;color:#ffffff;" viewBox="0 0 24 19" fill="currentColor" preserveAspectRatio="xMidYMid meet"><path d="M14.500 3H4a2.500 2.500 0 0 0-2.500 2.500V15A2.500 2.500 0 0 0 4 17.500h10A2.500 2.500 0 0 0 16.500 15V10.500" fill="none" stroke="currentColor" stroke-width="2"/><path d="M18.800 1.200l3.200 3.200L12 14.400l-4.200 1 1-4.200z"/></svg>
<div class="b" style="left:1320px;top:658px;width:35px;height:31px;background:#ea4335;border-radius:3px;"></div>
<svg class="ic" style="left:1334px;top:667.9px;width:7.3px;height:8.8px;color:#ffffff;" viewBox="0 0 14 17" fill="currentColor" preserveAspectRatio="xMidYMid meet"><path d="M0 1.600h4.200L5 0h4l.8 1.600H14v2.200H0z"/><path d="M1 5h12l-.7 10.500a1.600 1.600 0 0 1-1.600 1.500H3.300a1.600 1.600 0 0 1-1.600-1.500z"/></svg>
<div class="b" style="left:1357px;top:658px;width:35px;height:31px;background:#00aaff;border-radius:3px;"></div>
<svg class="ic" style="left:1369.8px;top:667.8px;width:10.4px;height:10.4px;color:#ffffff;" viewBox="0 0 512 512" fill="currentColor" preserveAspectRatio="xMidYMid meet"><path d="M173.898 439.404l-166.400-166.400c-9.997-9.997-9.997-26.206 0-36.204l36.203-36.204c9.997-9.998 26.207-9.998 36.204 0L192 312.690 432.095 72.596c9.997-9.997 26.207-9.997 36.204 0l36.203 36.204c9.997 9.997 9.997 26.206 0 36.204l-294.400 294.401c-9.998 9.997-26.207 9.997-36.204-.001z"/></svg>
<div class="b" style="left:275px;top:749px;width:1559px;height:1px;background:#2e3050;"></div>
<div class="b" style="left:1283px;top:709px;width:35px;height:31px;background:#00aaff;border-radius:3px;"></div>
<svg class="ic" style="left:1294.8px;top:717.4px;width:12.4px;height:9.8px;color:#ffffff;" viewBox="0 0 24 19" fill="currentColor" preserveAspectRatio="xMidYMid meet"><path d="M14.500 3H4a2.500 2.500 0 0 0-2.500 2.500V15A2.500 2.500 0 0 0 4 17.500h10A2.500 2.500 0 0 0 16.500 15V10.500" fill="none" stroke="currentColor" stroke-width="2"/><path d="M18.800 1.200l3.200 3.200L12 14.400l-4.200 1 1-4.200z"/></svg>
<div class="b" style="left:1320px;top:708px;width:35px;height:32px;background:#ea4335;border-radius:3px;"></div>
<svg class="ic" style="left:1334px;top:718.9px;width:7.3px;height:8.8px;color:#ffffff;" viewBox="0 0 14 17" fill="currentColor" preserveAspectRatio="xMidYMid meet"><path d="M0 1.600h4.200L5 0h4l.8 1.600H14v2.200H0z"/><path d="M1 5h12l-.7 10.500a1.600 1.600 0 0 1-1.600 1.500H3.300a1.600 1.600 0 0 1-1.600-1.500z"/></svg>
<div class="b" style="left:1357px;top:709px;width:35px;height:31px;background:#00aaff;border-radius:3px;"></div>
<svg class="ic" style="left:1369.8px;top:718.8px;width:10.4px;height:10.4px;color:#ffffff;" viewBox="0 0 512 512" fill="currentColor" preserveAspectRatio="xMidYMid meet"><path d="M173.898 439.404l-166.400-166.400c-9.997-9.997-9.997-26.206 0-36.204l36.203-36.204c9.997-9.998 26.207-9.998 36.204 0L192 312.690 432.095 72.596c9.997-9.997 26.207-9.997 36.204 0l36.203 36.204c9.997 9.997 9.997 26.206 0 36.204l-294.400 294.401c-9.998 9.997-26.207 9.997-36.204-.001z"/></svg>
<div class="b" style="left:275px;top:800px;width:1559px;height:1px;background:#2e3050;"></div>
<div class="b" style="left:1283px;top:760px;width:35px;height:31px;background:#00aaff;border-radius:3px;"></div>
<svg class="ic" style="left:1294.8px;top:768.4px;width:12.4px;height:9.8px;color:#ffffff;" viewBox="0 0 24 19" fill="currentColor" preserveAspectRatio="xMidYMid meet"><path d="M14.500 3H4a2.500 2.500 0 0 0-2.500 2.500V15A2.500 2.500 0 0 0 4 17.500h10A2.500 2.500 0 0 0 16.500 15V10.500" fill="none" stroke="currentColor" stroke-width="2"/><path d="M18.800 1.200l3.200 3.200L12 14.400l-4.200 1 1-4.200z"/></svg>
<div class="b" style="left:1320px;top:759px;width:35px;height:32px;background:#ea4335;border-radius:3px;"></div>
<svg class="ic" style="left:1334px;top:769.9px;width:7.3px;height:8.8px;color:#ffffff;" viewBox="0 0 14 17" fill="currentColor" preserveAspectRatio="xMidYMid meet"><path d="M0 1.600h4.200L5 0h4l.8 1.600H14v2.200H0z"/><path d="M1 5h12l-.7 10.500a1.600 1.600 0 0 1-1.600 1.500H3.300a1.600 1.600 0 0 1-1.600-1.500z"/></svg>
<div class="b" style="left:1357px;top:760px;width:35px;height:31px;background:#00aaff;border-radius:3px;"></div>
<svg class="ic" style="left:1369.8px;top:769.8px;width:10.4px;height:10.4px;color:#ffffff;" viewBox="0 0 512 512" fill="currentColor" preserveAspectRatio="xMidYMid meet"><path d="M173.898 439.404l-166.400-166.400c-9.997-9.997-9.997-26.206 0-36.204l36.203-36.204c9.997-9.998 26.207-9.998 36.204 0L192 312.690 432.095 72.596c9.997-9.997 26.207-9.997 36.204 0l36.203 36.204c9.997 9.997 9.997 26.206 0 36.204l-294.400 294.401c-9.998 9.997-26.207 9.997-36.204-.001z"/></svg>
<div class="b" style="left:275px;top:851px;width:1559px;height:1px;background:#2e3050;"></div>
<div class="b" style="left:1283px;top:811px;width:35px;height:31px;background:#00aaff;border-radius:3px;"></div>
<svg class="ic" style="left:1294.8px;top:819.4px;width:12.4px;height:9.8px;color:#ffffff;" viewBox="0 0 24 19" fill="currentColor" preserveAspectRatio="xMidYMid meet"><path d="M14.500 3H4a2.500 2.500 0 0 0-2.500 2.500V15A2.500 2.500 0 0 0 4 17.500h10A2.500 2.500 0 0 0 16.500 15V10.500" fill="none" stroke="currentColor" stroke-width="2"/><path d="M18.800 1.200l3.200 3.200L12 14.400l-4.200 1 1-4.200z"/></svg>
<div class="b" style="left:1320px;top:810px;width:35px;height:32px;background:#ea4335;border-radius:3px;"></div>
<svg class="ic" style="left:1334px;top:820.9px;width:7.3px;height:8.8px;color:#ffffff;" viewBox="0 0 14 17" fill="currentColor" preserveAspectRatio="xMidYMid meet"><path d="M0 1.600h4.200L5 0h4l.8 1.600H14v2.200H0z"/><path d="M1 5h12l-.7 10.500a1.600 1.600 0 0 1-1.600 1.500H3.300a1.600 1.600 0 0 1-1.600-1.500z"/></svg>
<div class="b" style="left:1357px;top:811px;width:32px;height:31px;background:#00aaff;border-radius:3px;"></div>
<svg class="ic" style="left:1369px;top:819.9px;width:9.7px;height:9.2px;color:#ffffff;" viewBox="0 0 10 10" fill="currentColor" preserveAspectRatio="xMidYMid meet"><path d="M3.800 0h2.400v3.800H10v2.400H6.200V10H3.800V6.200H0V3.800h3.800z"/></svg>
<svg class="ic" style="left:1193px;top:809.7px;width:33px;height:32.5px" viewBox="0 0 33 32.500"><defs><linearGradient id="cn" x1="0" y1="0" x2="1" y2="0"><stop offset="0" stop-color="#b9bbc1"/><stop offset=".22" stop-color="#f4f4f6"/><stop offset=".6" stop-color="#dedfe3"/><stop offset="1" stop-color="#aeb0b6"/></linearGradient></defs><rect width="33" height="32.500" rx="4.500" fill="#ffffff"/><rect x="8.500" y="2.200" width="15.600" height="28.200" rx="2.800" fill="url(#cn)"/><rect x="9.300" y="2.200" width="14" height="1.500" rx=".7" fill="#a9abb2"/><rect x="9.300" y="29" width="14" height="1.400" rx=".7" fill="#a9abb2"/><text transform="translate(20 27.800) rotate(-90)" font-family='"Liberation Serif", serif' font-weight="700" font-size="12" fill="#e8202e" textLength="23.500" lengthAdjust="spacingAndGlyphs">Coke</text></svg>
<div class="b" style="left:275px;top:903px;width:1559px;height:1px;background:#2e3050;"></div>
<div class="b" style="left:1283px;top:862px;width:35px;height:31px;background:#00aaff;border-radius:3px;"></div>
<svg class="ic" style="left:1294.8px;top:870.4px;width:12.4px;height:9.8px;color:#ffffff;" viewBox="0 0 24 19" fill="currentColor" preserveAspectRatio="xMidYMid meet"><path d="M14.500 3H4a2.500 2.500 0 0 0-2.500 2.500V15A2.500 2.500 0 0 0 4 17.500h10A2.500 2.500 0 0 0 16.500 15V10.500" fill="none" stroke="currentColor" stroke-width="2"/><path d="M18.800 1.200l3.200 3.200L12 14.400l-4.200 1 1-4.200z"/></svg>
<div class="b" style="left:1320px;top:862px;width:35px;height:31px;background:#ea4335;border-radius:3px;"></div>
<svg class="ic" style="left:1334px;top:871.9px;width:7.3px;height:8.8px;color:#ffffff;" viewBox="0 0 14 17" fill="currentColor" preserveAspectRatio="xMidYMid meet"><path d="M0 1.600h4.200L5 0h4l.8 1.600H14v2.200H0z"/><path d="M1 5h12l-.7 10.500a1.600 1.600 0 0 1-1.600 1.500H3.300a1.600 1.600 0 0 1-1.600-1.500z"/></svg>
<svg class="ic" style="left:1193px;top:861px;width:33px;height:33px" viewBox="0 0 33 33"><defs><radialGradient id="cf" cx=".55" cy=".3" r=".9"><stop offset="0" stop-color="#a4561f"/><stop offset=".5" stop-color="#7a3911"/><stop offset="1" stop-color="#3c1a08"/></radialGradient><clipPath id="cc"><rect width="33" height="33" rx="4.500"/></clipPath></defs><g clip-path="url(#cc)"><rect width="33" height="33" fill="url(#cf)"/><rect y="18" width="10" height="15" fill="#6a3a22" opacity=".8"/><ellipse cx="16" cy="28" rx="15" ry="6.500" fill="#d9d2ca"/><ellipse cx="17" cy="27.500" rx="12" ry="4.500" fill="#b9b0a7"/><path d="M6.500 16h23.500c0 8-4.500 13-11.800 13S6.500 24 6.500 16z" fill="#f3f0ec"/><ellipse cx="18.250" cy="16" rx="11.750" ry="4" fill="#faf8f5"/><ellipse cx="18.250" cy="16.400" rx="10.200" ry="3.100" fill="#160a05"/><path d="M17.500 15c3-1.800 8.500-1.400 10.500.8-1 2.500-5.500 3.500-9 3.200z" fill="#c48a52"/><path d="M29.500 18c4-.5 4 5-1.800 6" fill="none" stroke="#f3f0ec" stroke-width="1.800"/><ellipse cx="6.500" cy="27" rx="2.800" ry="1.900" fill="#3b1d10"/><ellipse cx="9.500" cy="30.500" rx="3" ry="1.800" fill="#2e160c"/><ellipse cx="26.500" cy="30" rx="2" ry="1.300" fill="#3b1d10"/><path d="M13.500 10c-2.500-3 2-5-1-8.500M17 9.500c3-2.500 9-1.500 10-5.500" fill="none" stroke="#f0d9c0" stroke-width=".9" opacity=".4"/></g></svg>
<div class="b" style="left:275px;top:954px;width:1559px;height:1px;background:#2e3050;"></div>
<div class="b" style="left:1283px;top:913px;width:35px;height:31px;background:#00aaff;border-radius:3px;"></div>
<svg class="ic" style="left:1294.8px;top:921.4px;width:12.4px;height:9.8px;color:#ffffff;" viewBox="0 0 24 19" fill="currentColor" preserveAspectRatio="xMidYMid meet"><path d="M14.500 3H4a2.500 2.500 0 0 0-2.500 2.500V15A2.500 2.500 0 0 0 4 17.500h10A2.500 2.500 0 0 0 16.500 15V10.500" fill="none" stroke="currentColor" stroke-width="2"/><path d="M18.800 1.200l3.200 3.200L12 14.400l-4.200 1 1-4.200z"/></svg>
<div class="b" style="left:1320px;top:913px;width:35px;height:32px;background:#ea4335;border-radius:3px;"></div>
<svg class="ic" style="left:1334px;top:922.9px;width:7.3px;height:8.8px;color:#ffffff;" viewBox="0 0 14 17" fill="currentColor" preserveAspectRatio="xMidYMid meet"><path d="M0 1.600h4.200L5 0h4l.8 1.600H14v2.200H0z"/><path d="M1 5h12l-.7 10.500a1.600 1.600 0 0 1-1.600 1.500H3.300a1.600 1.600 0 0 1-1.600-1.500z"/></svg>
<div class="b" style="left:1357px;top:913px;width:32px;height:31px;background:#00aaff;border-radius:3px;"></div>
<svg class="ic" style="left:1369px;top:921.9px;width:9.7px;height:9.2px;color:#ffffff;" viewBox="0 0 10 10" fill="currentColor" preserveAspectRatio="xMidYMid meet"><path d="M3.800 0h2.400v3.800H10v2.400H6.200V10H3.800V6.200H0V3.800h3.800z"/></svg>
<div class="b" style="left:1276px;top:805px;width:47px;height:42px;border:3px solid #ff4444;box-sizing:border-box;"></div>
<span class="t" style="left:252.70px;top:107px;font-size:13px;font-weight:400;color:#8b8ea3;letter-spacing:0.088px;">Settings</span>
<span class="t" style="left:334.20px;top:107px;font-size:13px;font-weight:400;color:#8b8ea3;letter-spacing:0.102px;">Define price</span>
<span class="t" style="left:518.40px;top:107px;font-size:13px;font-weight:400;color:#8b8ea3;letter-spacing:-0.027px;">Employees</span>
<span class="t" style="left:612.00px;top:107px;font-size:13px;font-weight:400;color:#8b8ea3;letter-spacing:0.102px;">Center news</span>
<span class="t" style="left:714.90px;top:107px;font-size:13px;font-weight:400;color:#8b8ea3;letter-spacing:-0.135px;">License</span>
<span class="t" style="left:787.80px;top:107px;font-size:13px;font-weight:400;color:#8b8ea3;letter-spacing:0.083px;">Sub centers</span>
<span class="t" style="left:433.90px;top:107px;font-size:13px;font-weight:400;color:#2ab84f;letter-spacing:0.227px;">Inventory</span>
<span class="t" style="left:275.00px;top:193px;font-size:15.5px;font-weight:700;color:#ffffff;letter-spacing:0.342px;">Inventory</span>
<span class="t" style="left:304.40px;top:268px;font-size:12.5px;font-weight:400;color:#2ab84f;letter-spacing:0.047px;">All</span>
<span class="t" style="left:369.50px;top:268px;font-size:12.5px;font-weight:400;color:#c3c6d3;letter-spacing:0.434px;">Offer</span>
<span class="t" style="left:443.90px;top:268px;font-size:12.5px;font-weight:400;color:#c3c6d3;letter-spacing:0.261px;">Accessories</span>
<span class="t" style="left:559.00px;top:268px;font-size:12.5px;font-weight:400;color:#c3c6d3;letter-spacing:0.315px;">cold drinks</span>
<span class="t" style="left:666.60px;top:268px;font-size:12.5px;font-weight:400;color:#c3c6d3;letter-spacing:0.006px;">Hot Drinks</span>
<span class="t" style="left:769.70px;top:268px;font-size:12.5px;font-weight:400;color:#c3c6d3;letter-spacing:-0.011px;">invGroup1</span>
<span class="t" style="left:589.80px;top:319px;font-size:13px;font-weight:400;color:#6f7290;letter-spacing:-0.141px;">Search...</span>
<span class="t" style="left:283.90px;top:367px;font-size:12.4px;font-weight:700;color:#c6c7d0;letter-spacing:-0.561px;word-spacing:2px;">NAME</span>
<span class="t" style="left:446.10px;top:367px;font-size:12.4px;font-weight:700;color:#c6c7d0;letter-spacing:-0.934px;word-spacing:2px;">GROUP</span>
<span class="t" style="left:639.80px;top:367px;font-size:12.4px;font-weight:700;color:#c6c7d0;letter-spacing:-0.689px;word-spacing:2px;">STOCK</span>
<span class="t" style="left:704.40px;top:367px;font-size:12.4px;font-weight:700;color:#c6c7d0;letter-spacing:-0.828px;word-spacing:2px;">PROMOTED</span>
<span class="t" style="left:820.40px;top:367px;font-size:12.4px;font-weight:700;color:#c6c7d0;letter-spacing:-1.030px;word-spacing:2px;">CLIENT</span>
<span class="t" style="left:882.70px;top:367px;font-size:12.4px;font-weight:700;color:#c6c7d0;letter-spacing:-1.126px;word-spacing:2px;">COST PRICE</span>
<span class="t" style="left:969.90px;top:367px;font-size:12.4px;font-weight:700;color:#c6c7d0;letter-spacing:-1.432px;word-spacing:2px;">SALES PRICE</span>
<span class="t" style="left:1061.60px;top:367px;font-size:12.4px;font-weight:700;color:#c6c7d0;letter-spacing:-0.137px;word-spacing:2px;">TAX</span>
<span class="t" style="left:1109.40px;top:367px;font-size:12.4px;font-weight:700;color:#c6c7d0;letter-spacing:-0.944px;word-spacing:2px;">COIN PRICE</span>
<span class="t" style="left:1193.00px;top:367px;font-size:12.4px;font-weight:700;color:#c6c7d0;letter-spacing:-0.656px;word-spacing:2px;">IMAGE</span>
<span class="t" style="left:283.00px;top:413px;font-size:11.7px;font-weight:700;color:#858899;letter-spacing:0.000px;transform:scaleX(.68);transform-origin:0 50%;">1</span>
<span class="t" style="left:445.90px;top:413px;font-size:11.7px;font-weight:700;color:#858899;letter-spacing:-0.119px;">Offers / Package1</span>
<span class="t" style="left:674.60px;top:409px;font-size:18px;font-weight:700;color:#858899;letter-spacing:0.000px;">-</span>
<span class="t" style="left:755.00px;top:413px;font-size:11.7px;font-weight:700;color:#858899;letter-spacing:-0.094px;">No</span>
<span class="t" style="left:845.00px;top:413px;font-size:11.7px;font-weight:700;color:#858899;letter-spacing:-0.094px;">No</span>
<span class="t" style="left:927.10px;top:413px;font-size:11.7px;font-weight:700;color:#858899;letter-spacing:0.250px;">0.00</span>
<span class="t" style="left:1020.50px;top:413px;font-size:11.7px;font-weight:700;color:#858899;letter-spacing:-0.883px;">1.00</span>
<span class="t" style="left:1070.50px;top:414px;font-size:10.8px;font-weight:700;color:#858899;letter-spacing:-0.509px;">5%</span>
<span class="t" style="left:1168.17px;top:413px;font-size:11.7px;font-weight:700;color:#858899;letter-spacing:0.000px;transform:scaleX(.68);transform-origin:100% 50%;">1</span>
<span class="t" style="left:283.90px;top:464px;font-size:11.7px;font-weight:700;color:#858899;letter-spacing:-0.739px;">1234</span>
<span class="t" style="left:445.90px;top:464px;font-size:11.7px;font-weight:700;color:#858899;letter-spacing:-0.007px;">Offers</span>
<span class="t" style="left:674.60px;top:460px;font-size:18px;font-weight:700;color:#858899;letter-spacing:0.000px;">-</span>
<span class="t" style="left:755.00px;top:464px;font-size:11.7px;font-weight:700;color:#858899;letter-spacing:-0.094px;">No</span>
<span class="t" style="left:840.60px;top:464px;font-size:11.7px;font-weight:700;color:#858899;letter-spacing:-0.128px;">Yes</span>
<span class="t" style="left:927.10px;top:464px;font-size:11.7px;font-weight:700;color:#858899;letter-spacing:0.250px;">0.00</span>
<span class="t" style="left:1020.50px;top:464px;font-size:11.7px;font-weight:700;color:#858899;letter-spacing:-0.883px;">1.00</span>
<span class="t" style="left:1070.50px;top:465px;font-size:10.8px;font-weight:700;color:#858899;letter-spacing:-0.509px;">5%</span>
<span class="t" style="left:1169.08px;top:464px;font-size:11.7px;font-weight:700;color:#858899;letter-spacing:0.000px;">0</span>
<span class="t" style="left:283.90px;top:515px;font-size:11.7px;font-weight:700;color:#858899;letter-spacing:-0.263px;">123456</span>
<span class="t" style="left:445.90px;top:515px;font-size:11.7px;font-weight:700;color:#858899;letter-spacing:-0.007px;">Offers</span>
<span class="t" style="left:674.60px;top:511px;font-size:18px;font-weight:700;color:#858899;letter-spacing:0.000px;">-</span>
<span class="t" style="left:755.00px;top:515px;font-size:11.7px;font-weight:700;color:#858899;letter-spacing:-0.094px;">No</span>
<span class="t" style="left:840.60px;top:515px;font-size:11.7px;font-weight:700;color:#858899;letter-spacing:-0.128px;">Yes</span>
<span class="t" style="left:927.10px;top:515px;font-size:11.7px;font-weight:700;color:#858899;letter-spacing:0.250px;">0.00</span>
<span class="t" style="left:1020.50px;top:515px;font-size:11.7px;font-weight:700;color:#858899;letter-spacing:-0.883px;">1.00</span>
<span class="t" style="left:1070.50px;top:516px;font-size:10.8px;font-weight:700;color:#858899;letter-spacing:-0.509px;">5%</span>
<span class="t" style="left:1168.17px;top:515px;font-size:11.7px;font-weight:700;color:#858899;letter-spacing:0.000px;transform:scaleX(.68);transform-origin:100% 50%;">1</span>
<span class="t" style="left:283.90px;top:566px;font-size:11.7px;font-weight:700;color:#858899;letter-spacing:0.000px;">2</span>
<span class="t" style="left:445.90px;top:566px;font-size:11.7px;font-weight:700;color:#858899;letter-spacing:-0.007px;">Offers</span>
<span class="t" style="left:674.60px;top:562px;font-size:18px;font-weight:700;color:#858899;letter-spacing:0.000px;">-</span>
<span class="t" style="left:755.00px;top:566px;font-size:11.7px;font-weight:700;color:#858899;letter-spacing:-0.094px;">No</span>
<span class="t" style="left:840.60px;top:566px;font-size:11.7px;font-weight:700;color:#858899;letter-spacing:-0.128px;">Yes</span>
<span class="t" style="left:927.10px;top:566px;font-size:11.7px;font-weight:700;color:#858899;letter-spacing:0.250px;">0.00</span>
<span class="t" style="left:1011.00px;top:566px;font-size:11.7px;font-weight:700;color:#858899;letter-spacing:0.088px;">30.00</span>
<span class="t" style="left:1070.50px;top:567px;font-size:10.8px;font-weight:700;color:#858899;letter-spacing:-0.509px;">5%</span>
<span class="t" style="left:1169.08px;top:566px;font-size:11.7px;font-weight:700;color:#858899;letter-spacing:0.000px;">0</span>
<span class="t" style="left:283.90px;top:616px;font-size:11.7px;font-weight:700;color:#858899;letter-spacing:0.000px;">3</span>
<span class="t" style="left:445.90px;top:616px;font-size:11.7px;font-weight:700;color:#858899;letter-spacing:-0.007px;">Offers</span>
<span class="t" style="left:674.60px;top:612px;font-size:18px;font-weight:700;color:#858899;letter-spacing:0.000px;">-</span>
<span class="t" style="left:755.00px;top:616px;font-size:11.7px;font-weight:700;color:#858899;letter-spacing:-0.094px;">No</span>
<span class="t" style="left:840.60px;top:616px;font-size:11.7px;font-weight:700;color:#858899;letter-spacing:-0.128px;">Yes</span>
<span class="t" style="left:927.10px;top:616px;font-size:11.7px;font-weight:700;color:#858899;letter-spacing:0.250px;">0.00</span>
<span class="t" style="left:1011.00px;top:616px;font-size:11.7px;font-weight:700;color:#858899;letter-spacing:0.088px;">30.00</span>
<span class="t" style="left:1070.50px;top:617px;font-size:10.8px;font-weight:700;color:#858899;letter-spacing:-0.509px;">5%</span>
<span class="t" style="left:1169.08px;top:616px;font-size:11.7px;font-weight:700;color:#858899;letter-spacing:0.000px;">0</span>
<span class="t" style="left:283.90px;top:667px;font-size:11.7px;font-weight:700;color:#858899;letter-spacing:0.000px;">a</span>
<span class="t" style="left:445.90px;top:667px;font-size:11.7px;font-weight:700;color:#858899;letter-spacing:-0.007px;">Offers</span>
<span class="t" style="left:674.60px;top:663px;font-size:18px;font-weight:700;color:#858899;letter-spacing:0.000px;">-</span>
<span class="t" style="left:755.00px;top:667px;font-size:11.7px;font-weight:700;color:#858899;letter-spacing:-0.094px;">No</span>
<span class="t" style="left:840.60px;top:667px;font-size:11.7px;font-weight:700;color:#858899;letter-spacing:-0.128px;">Yes</span>
<span class="t" style="left:927.10px;top:667px;font-size:11.7px;font-weight:700;color:#858899;letter-spacing:0.250px;">0.00</span>
<span class="t" style="left:1014.00px;top:667px;font-size:11.7px;font-weight:700;color:#858899;letter-spacing:-0.662px;">15.00</span>
<span class="t" style="left:1070.50px;top:668px;font-size:10.8px;font-weight:700;color:#858899;letter-spacing:-0.509px;">5%</span>
<span class="t" style="left:1168.17px;top:667px;font-size:11.7px;font-weight:700;color:#858899;letter-spacing:0.000px;transform:scaleX(.68);transform-origin:100% 50%;">1</span>
<span class="t" style="left:283.90px;top:718px;font-size:11.7px;font-weight:700;color:#858899;letter-spacing:0.093px;">all day pass</span>
<span class="t" style="left:445.90px;top:718px;font-size:11.7px;font-weight:700;color:#858899;letter-spacing:-0.007px;">Offers</span>
<span class="t" style="left:674.60px;top:714px;font-size:18px;font-weight:700;color:#858899;letter-spacing:0.000px;">-</span>
<span class="t" style="left:755.00px;top:718px;font-size:11.7px;font-weight:700;color:#858899;letter-spacing:-0.094px;">No</span>
<span class="t" style="left:845.00px;top:718px;font-size:11.7px;font-weight:700;color:#858899;letter-spacing:-0.094px;">No</span>
<span class="t" style="left:927.10px;top:718px;font-size:11.7px;font-weight:700;color:#858899;letter-spacing:0.250px;">0.00</span>
<span class="t" style="left:1006.40px;top:718px;font-size:11.7px;font-weight:700;color:#858899;letter-spacing:-0.310px;">100.00</span>
<span class="t" style="left:1070.50px;top:719px;font-size:10.8px;font-weight:700;color:#858899;letter-spacing:-0.509px;">5%</span>
<span class="t" style="left:1169.08px;top:718px;font-size:11.7px;font-weight:700;color:#858899;letter-spacing:0.000px;">0</span>
<span class="t" style="left:283.90px;top:769px;font-size:11.7px;font-weight:700;color:#858899;letter-spacing:0.188px;">all time</span>
<span class="t" style="left:445.90px;top:769px;font-size:11.7px;font-weight:700;color:#858899;letter-spacing:-0.010px;">Offers / Night</span>
<span class="t" style="left:674.60px;top:765px;font-size:18px;font-weight:700;color:#858899;letter-spacing:0.000px;">-</span>
<span class="t" style="left:755.00px;top:769px;font-size:11.7px;font-weight:700;color:#858899;letter-spacing:-0.094px;">No</span>
<span class="t" style="left:840.60px;top:769px;font-size:11.7px;font-weight:700;color:#858899;letter-spacing:-0.128px;">Yes</span>
<span class="t" style="left:927.10px;top:769px;font-size:11.7px;font-weight:700;color:#858899;letter-spacing:0.250px;">0.00</span>
<span class="t" style="left:1013.60px;top:769px;font-size:11.7px;font-weight:700;color:#858899;letter-spacing:-0.563px;">10.00</span>
<span class="t" style="left:1070.50px;top:770px;font-size:10.8px;font-weight:700;color:#858899;letter-spacing:-0.509px;">5%</span>
<span class="t" style="left:1169.08px;top:769px;font-size:11.7px;font-weight:700;color:#858899;letter-spacing:0.000px;">0</span>
<span class="t" style="left:283.90px;top:820px;font-size:11.7px;font-weight:700;color:#858899;letter-spacing:0.302px;">coca cola</span>
<span class="t" style="left:445.90px;top:820px;font-size:11.7px;font-weight:700;color:#858899;letter-spacing:-0.116px;">cold drinks</span>
<span class="t" style="left:666.30px;top:820px;font-size:11.7px;font-weight:700;color:#858899;letter-spacing:1.084px;">60</span>
<span class="t" style="left:755.00px;top:820px;font-size:11.7px;font-weight:700;color:#858899;letter-spacing:-0.094px;">No</span>
<span class="t" style="left:840.60px;top:820px;font-size:11.7px;font-weight:700;color:#858899;letter-spacing:-0.128px;">Yes</span>
<span class="t" style="left:920.70px;top:820px;font-size:11.7px;font-weight:700;color:#858899;letter-spacing:0.162px;">25.00</span>
<span class="t" style="left:1010.70px;top:820px;font-size:11.7px;font-weight:700;color:#858899;letter-spacing:0.162px;">25.00</span>
<span class="t" style="left:1070.50px;top:821px;font-size:10.8px;font-weight:700;color:#858899;letter-spacing:-0.509px;">5%</span>
<span class="t" style="left:1169.08px;top:820px;font-size:11.7px;font-weight:700;color:#858899;letter-spacing:0.000px;">0</span>
<span class="t" style="left:283.90px;top:871px;font-size:11.7px;font-weight:700;color:#858899;letter-spacing:0.372px;">coffee</span>
<span class="t" style="left:445.90px;top:871px;font-size:11.7px;font-weight:700;color:#858899;letter-spacing:0.263px;">Default</span>
<span class="t" style="left:674.60px;top:867px;font-size:18px;font-weight:700;color:#858899;letter-spacing:0.000px;">-</span>
<span class="t" style="left:755.00px;top:871px;font-size:11.7px;font-weight:700;color:#858899;letter-spacing:-0.094px;">No</span>
<span class="t" style="left:840.60px;top:871px;font-size:11.7px;font-weight:700;color:#858899;letter-spacing:-0.128px;">Yes</span>
<span class="t" style="left:927.40px;top:871px;font-size:11.7px;font-weight:700;color:#858899;letter-spacing:0.150px;">3.00</span>
<span class="t" style="left:1017.40px;top:871px;font-size:11.7px;font-weight:700;color:#858899;letter-spacing:0.150px;">5.00</span>
<span class="t" style="left:1070.50px;top:872px;font-size:10.8px;font-weight:700;color:#858899;letter-spacing:-0.509px;">5%</span>
<span class="t" style="left:1164.30px;top:872px;font-size:10.8px;font-weight:700;color:#858899;letter-spacing:-0.716px;">10</span>
<span class="t" style="left:283.90px;top:922px;font-size:11.7px;font-weight:700;color:#858899;letter-spacing:0.088px;">Conquer coin</span>
<span class="t" style="left:445.90px;top:922px;font-size:11.7px;font-weight:700;color:#858899;letter-spacing:-0.119px;">Accessories</span>
<span class="t" style="left:645.30px;top:922px;font-size:11.7px;font-weight:700;color:#858899;letter-spacing:0.646px;">98500</span>
<span class="t" style="left:755.00px;top:922px;font-size:11.7px;font-weight:700;color:#858899;letter-spacing:-0.094px;">No</span>
<span class="t" style="left:845.00px;top:922px;font-size:11.7px;font-weight:700;color:#858899;letter-spacing:-0.094px;">No</span>
<span class="t" style="left:927.10px;top:922px;font-size:11.7px;font-weight:700;color:#858899;letter-spacing:0.250px;">0.50</span>
<span class="t" style="left:1020.50px;top:922px;font-size:11.7px;font-weight:700;color:#858899;letter-spacing:-0.883px;">1.00</span>
<span class="t" style="left:1070.50px;top:923px;font-size:10.8px;font-weight:700;color:#858899;letter-spacing:-0.509px;">5%</span>
<span class="t" style="left:1169.08px;top:922px;font-size:11.7px;font-weight:700;color:#858899;letter-spacing:0.000px;">0</span>
</main>
</body></html>
